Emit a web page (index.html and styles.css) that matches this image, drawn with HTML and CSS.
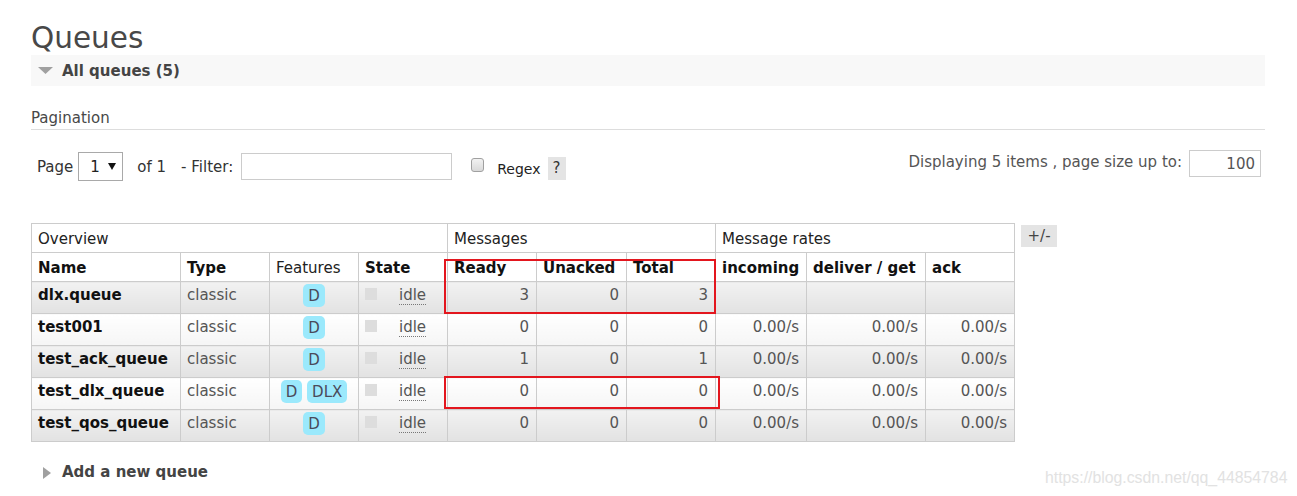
FILE: index.html
```html
<!DOCTYPE html>
<html>
<head>
<meta charset="utf-8">
<title>Queues</title>
<link rel="stylesheet" href="styles.css">
</head>
<body>
<div class="page">
  <h1 class="title">Queues</h1>
  <div class="section">
    <h2 class="section-head"><svg class="tri-down" viewBox="0 0 15 7"><polygon points="0,0 15,0 7.5,7"/></svg>All queues (5)</h2>
    <div class="section-body">
      <h3 class="subhead">Pagination</h3>
      <div class="pagination">
        <div class="pg-left">
          <span class="pg-label">Page</span>
          <span class="fake-select"><span class="sel-val">1</span><svg class="sel-arrow" viewBox="0 0 8 7"><polygon points="0,0 8,0 4,7"/></svg></span>
          <span class="pg-of">of 1</span>
          <span class="pg-filter">- Filter:</span>
          <input class="filter-input" type="text">
          <span class="checkbox"></span>
          <span class="regex">Regex</span>
          <span class="help">?</span>
        </div>
        <div class="pg-right">
          <span class="pg-display">Displaying 5 items , page size up to:</span>
          <input class="size-input" type="text" value="100">
        </div>
      </div>
      <div class="table-row">
        <div class="table-wrap">
          <table class="list">
            <colgroup>
              <col class="c-name"><col class="c-89"><col class="c-89"><col class="c-89">
              <col class="c-89"><col class="c-90"><col class="c-89">
              <col class="c-91"><col class="c-119"><col class="c-89">
            </colgroup>
            <thead>
              <tr class="group">
                <th colspan="4">Overview</th>
                <th colspan="3">Messages</th>
                <th colspan="3">Message rates</th>
              </tr>
              <tr class="cols">
                <th>Name</th><th>Type</th><th class="plain">Features</th><th>State</th>
                <th>Ready</th><th>Unacked</th><th>Total</th>
                <th>incoming</th><th>deliver / get</th><th>ack</th>
              </tr>
            </thead>
            <tbody>
              <tr class="alt1">
                <td class="name">dlx.queue</td><td class="type">classic</td>
                <td class="features"><span class="badge">D</span></td>
                <td class="state"><span class="sq"></span><span class="idle">idle</span></td>
                <td class="num">3</td><td class="num">0</td><td class="num">3</td>
                <td class="num"></td><td class="num"></td><td class="num"></td>
              </tr>
              <tr class="alt2">
                <td class="name">test001</td><td class="type">classic</td>
                <td class="features"><span class="badge">D</span></td>
                <td class="state"><span class="sq"></span><span class="idle">idle</span></td>
                <td class="num">0</td><td class="num">0</td><td class="num">0</td>
                <td class="num">0.00/s</td><td class="num">0.00/s</td><td class="num">0.00/s</td>
              </tr>
              <tr class="alt1">
                <td class="name">test_ack_queue</td><td class="type">classic</td>
                <td class="features"><span class="badge">D</span></td>
                <td class="state"><span class="sq"></span><span class="idle">idle</span></td>
                <td class="num">1</td><td class="num">0</td><td class="num">1</td>
                <td class="num">0.00/s</td><td class="num">0.00/s</td><td class="num">0.00/s</td>
              </tr>
              <tr class="alt2">
                <td class="name">test_dlx_queue</td><td class="type">classic</td>
                <td class="features"><span class="badge">D</span> <span class="badge">DLX</span></td>
                <td class="state"><span class="sq"></span><span class="idle">idle</span></td>
                <td class="num">0</td><td class="num">0</td><td class="num">0</td>
                <td class="num">0.00/s</td><td class="num">0.00/s</td><td class="num">0.00/s</td>
              </tr>
              <tr class="alt1">
                <td class="name">test_qos_queue</td><td class="type">classic</td>
                <td class="features"><span class="badge">D</span></td>
                <td class="state"><span class="sq"></span><span class="idle">idle</span></td>
                <td class="num">0</td><td class="num">0</td><td class="num">0</td>
                <td class="num">0.00/s</td><td class="num">0.00/s</td><td class="num">0.00/s</td>
              </tr>
            </tbody>
          </table>
          <div class="annot annot-1"></div>
          <div class="annot annot-2"></div>
        </div>
        <span class="toggle-cols">+/-</span>
      </div>
    </div>
  </div>
  <h2 class="section-head closed"><svg class="tri-right" viewBox="0 0 8 12"><polygon points="0,0 8,6 0,12"/></svg>Add a new queue</h2>
</div>
<div class="watermark">https://blog.csdn.net/qq_44854784</div>
</body>
</html>
```

FILE: styles.css
```css
* { box-sizing: border-box; }

body {
  margin: 0;
  font-family: "DejaVu Sans", Verdana, sans-serif;
  font-size: 15px;
  color: #484848;
  background: #fff;
}

.page {
  width: 1297px;
  padding: 0 32px 0 31px;
}

.title {
  margin: 21px 0 0;
  font-size: 29.5px;
  line-height: 34px;
  font-weight: normal;
  color: #484848;
}

.section-head {
  display: flex;
  align-items: center;
  height: 31px;
  margin: 0;
  padding: 2px 0 0 7px;
  font-size: 15px;
  line-height: 29px;
  font-weight: bold;
  color: #444;
  background: #f8f8f8;
}

.tri-down {
  width: 15px;
  height: 7px;
  margin: -2px 9px 0 0;
  fill: #a0a0a0;
}

.section-head.closed {
  background: none;
  margin-top: 14px;
  padding-left: 12px;
}

.tri-right {
  width: 8px;
  height: 12px;
  margin: 0 11px 0 0;
  fill: #a0a0a0;
}

.subhead {
  margin: 23px 0 0;
  padding-bottom: 2px;
  border-bottom: 1px solid #ddd;
  font-size: 15px;
  line-height: 18px;
  font-weight: normal;
  color: #484848;
}

/* pagination */
.pagination {
  display: flex;
  justify-content: space-between;
  align-items: flex-start;
  margin-top: 20px;
}

.pg-left {
  display: flex;
  align-items: center;
  margin-top: 2px;
  height: 29px;
  color: #333;
  line-height: 18px;
}

.pg-label { margin-left: 6px; }

.fake-select {
  display: flex;
  align-items: center;
  width: 45px;
  height: 29px;
  margin-left: 5px;
  padding-left: 11px;
  border: 1px solid #a9a9a9;
  background: #fff;
  color: #222;
}

.sel-arrow {
  width: 8px;
  height: 7px;
  margin-left: 8px;
  fill: #111;
}

.pg-of { margin-left: 14px; }
.pg-filter { margin-left: 15px; }

.filter-input {
  width: 211px;
  height: 27px;
  margin: 0 0 0 8px;
  padding: 0 4px;
  border: 1px solid #ccc;
  font-family: inherit;
  font-size: 15px;
  outline: none;
}

.checkbox {
  display: block;
  width: 13px;
  height: 14px;
  margin: 0 0 3px 19px;
  border: 1px solid #a0a0a0;
  border-radius: 3px;
  background: linear-gradient(#f2f2f2, #d9d9d9);
}

.regex {
  margin: 5px 0 0 13px;
  font-size: 14px;
  color: #222;
}

.help {
  width: 18px;
  height: 23px;
  margin: 4px 0 0 7px;
  background: #e4e4e4;
  color: #333;
  text-align: center;
  line-height: 23px;
}

.pg-right {
  display: flex;
  align-items: center;
  margin-right: 4px;
  height: 27px;
  color: #555;
  line-height: 18px;
}

.pg-display { margin-bottom: 3px; }

.size-input {
  width: 72px;
  height: 27px;
  margin: 0 0 0 7px;
  padding: 0 5px 0 0;
  border: 1px solid #ccc;
  font-family: inherit;
  font-size: 15px;
  color: #555;
  text-align: right;
  outline: none;
}

/* table */
.table-row {
  display: flex;
  align-items: flex-start;
  gap: 6px;
  margin-top: 42px;
}

.table-wrap { position: relative; }

table.list {
  border-collapse: collapse;
  table-layout: fixed;
  width: 984px;
}

col.c-name { width: 149px; }
col.c-89 { width: 89px; }
col.c-90 { width: 90px; }
col.c-91 { width: 91px; }
col.c-119 { width: 119px; }

table.list th,
table.list td {
  border: 1px solid #ccc;
  text-align: left;
  white-space: nowrap;
  overflow: hidden;
  vertical-align: top;
}

table.list tr.group th {
  padding: 5px 6px 3px;
  line-height: 20px;
  font-weight: normal;
  color: #222;
  background: #fff;
}

table.list tr.cols th {
  padding: 5px 6px 3px;
  line-height: 20px;
  font-weight: bold;
  color: #111;
  background: #fff;
}

table.list tr.cols th.plain { font-weight: normal; color: #222; }

table.list td {
  padding: 2px 7px 6px;
  line-height: 23px;
  color: #555;
}

table.list td.name,
table.list td.type,
table.list td.state { padding-left: 6px; }

table.list tr.alt1 td { background: linear-gradient(#f2f2f2, #e2e2e2); }
table.list tr.alt2 td { background: linear-gradient(#ffffff, #f5f5f5); }

table.list td.name { font-weight: bold; color: #111; }
table.list td.num { text-align: right; }
table.list td.features { text-align: center; }

.badge {
  display: inline-block;
  vertical-align: top;
  height: 23px;
  padding: 2px 5px 0;
  line-height: 21px;
  border-radius: 5px;
  background: #9be9fc;
  color: #4a4a5a;
}

.sq {
  display: inline-block;
  width: 12px;
  height: 12px;
  margin-right: 22px;
  background: #ddd;
}

.idle {
  border-bottom: 1px dotted #777;
  color: #555;
}

.annot {
  position: absolute;
  left: 413px;
  border: 2px solid #e3161e;
}

.annot-1 { top: 36px; width: 272px; height: 55px; }
.annot-2 { top: 153px; width: 276px; height: 33px; }

.toggle-cols {
  margin-top: 2px;
  width: 36px;
  height: 22px;
  line-height: 22px;
  text-align: center;
  background: #e4e4e4;
  color: #444;
}

.watermark {
  position: absolute;
  left: 1045px;
  top: 470px;
  font-family: "Liberation Sans", Arial, sans-serif;
  font-size: 15.8px;
  line-height: 16px;
  color: #e2e2e2;
  white-space: nowrap;
}
```
